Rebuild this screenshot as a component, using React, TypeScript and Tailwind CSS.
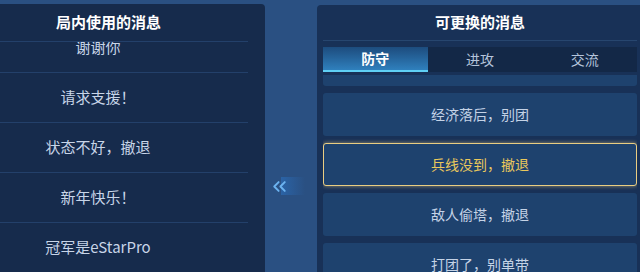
import { ChevronsLeft } from 'lucide-react';

const usedMessages = ['谢谢你', '请求支援！', '状态不好，撤退', '新年快乐！', '冠军是eStarPro'];
const swapMessages = ['经济落后，别团', '兵线没到，撤退', '敌人偷塔，撤退', '打团了，别单带'];
const tabs = ['防守', '进攻', '交流'];

export default function App() {
  return (
    <div
      className="w-[640px] h-[272px] overflow-hidden bg-[#2a5082] flex pt-[4px] font-['Noto_Sans_CJK_SC','Noto_Sans',sans-serif]"
    >
      {/* Left panel - messages in use */}
      <div className="w-[265px] shrink-0 bg-[#162b4c] rounded-tr-[4px] flex flex-col">
        <div className="h-[37px] flex items-center justify-center pr-[48px] text-[15px] font-bold text-white">
          局内使用的消息
        </div>
        <div className="w-[248px] border-t border-[#23406a] flex-1 overflow-hidden">
          <div className="-mt-[19px]">
            {usedMessages.map((msg) => (
              <div
                key={msg}
                className="h-[50px] flex items-center justify-center pr-[52px] border-b border-[#23406a] text-[15px] text-[#c8d5e8]"
              >
                {msg}
              </div>
            ))}
          </div>
        </div>
      </div>

      {/* Middle - move arrow */}
      <div className="w-[52px] shrink-0 flex items-start pt-[173px] pl-[4px]">
        <div className="relative w-[36px] h-[18px] flex items-center">
          <div className="absolute left-[12px] top-0 w-[24px] h-[18px] bg-gradient-to-r from-[#2a63a6] to-[#2a5082]" />
          <ChevronsLeft className="relative w-[21px] h-[21px] text-[#6cb3f0]" strokeWidth={2.2} />
        </div>
      </div>

      {/* Right panel - swappable messages */}
      <div className="flex-1 mt-[1px] bg-[#183157] rounded-tl-[4px] flex flex-col pl-[6px] pr-[3px]">
        <div className="h-[36px] flex items-center justify-center text-[15px] font-bold text-white border-b border-[#27466f]">
          可更换的消息
        </div>
        <div className="mt-[6px] h-[25px] flex bg-[#132847]">
          {tabs.map((tab, i) => (
            <div
              key={tab}
              className={
                i === 0
                  ? 'flex-1 flex items-center justify-center text-[14px] font-bold text-white bg-gradient-to-b from-[#1d4c7e] to-[#2f80bd] border-b-2 border-[#5fd0f5]'
                  : 'flex-1 flex items-center justify-center text-[14px] text-[#b5c5dc]'
              }
            >
              {tab}
            </div>
          ))}
        </div>
        <div className="mt-[3px] flex-1 overflow-hidden flex flex-col gap-[7px]">
          {/* card scrolled mostly out of view */}
          <div className="h-[11px] shrink-0 rounded-b-[3px] bg-[#1e426e]" />
          {swapMessages.map((msg, i) => (
            <div
              key={msg}
              className={
                i === 1
                  ? 'h-[43px] shrink-0 rounded-[3px] bg-[#1e426e] border-[1.5px] border-[#e9cd82] shadow-[0_0_4px_rgba(233,205,130,0.6)] flex items-center justify-center text-[14px] text-[#eac85c]'
                  : 'h-[43px] shrink-0 rounded-[3px] bg-[#1e426e] flex items-center justify-center text-[14px] text-[#c5d3e6]'
              }
            >
              {msg}
            </div>
          ))}
        </div>
      </div>
    </div>
  );
}
